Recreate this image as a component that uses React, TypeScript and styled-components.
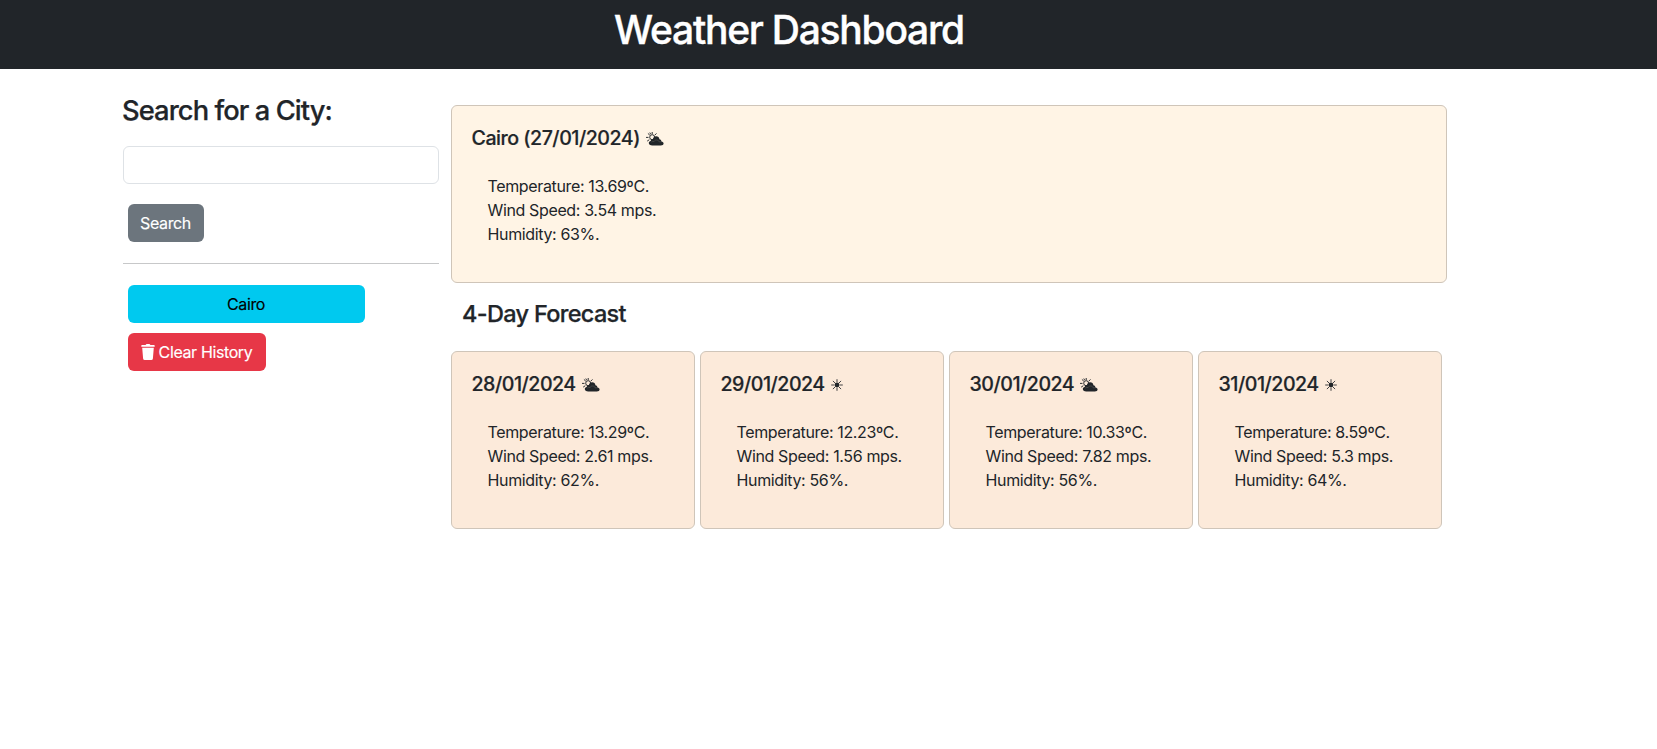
import React from "react";
import styled, { createGlobalStyle } from "styled-components";

const GlobalStyle = createGlobalStyle`
  *, *::before, *::after { box-sizing: border-box; }
  body {
    margin: 0;
    background: #fff;
    color: #212529;
    font-family: Inter, "Liberation Sans", sans-serif;
    font-size: 16px;
    line-height: 24px;
    font-feature-settings: "calt" 0;
  }
`;

const Header = styled.header`
  height: 69px;
  padding: 6px 79px 0 0;
  background: #212529;
  color: #fff;
  text-align: center;
`;

const PageTitle = styled.h1`
  margin: 0;
  font-size: 39px;
  line-height: 48px;
  font-weight: 500;
  letter-spacing: -1.25px;
  -webkit-text-stroke: 0.4px currentColor;
`;

const Layout = styled.div`
  display: flex;
  align-items: flex-start;
  width: 1324px;
  margin-left: 123px;
`;

const Sidebar = styled.aside`
  width: 316px;
  margin-right: 12px;
  padding-top: 25px;
`;

const SearchForm = styled.form`
  display: flex;
  flex-direction: column;
  align-items: flex-start;
`;

const SidebarTitle = styled.h3`
  margin: 0 0 18px -1px;
  font-size: 27.3px;
  line-height: 34px;
  font-weight: 500;
  letter-spacing: -0.92px;
  -webkit-text-stroke: 0.25px currentColor;
`;

const CityInput = styled.input`
  width: 100%;
  height: 38px;
  padding: 6px 12px;
  border: 1px solid #dee2e6;
  border-radius: 6px;
  background: #fff;
  font: inherit;
`;

const Button = styled.button<{ $bg: string; $color?: string; $width: number }>`
  display: flex;
  align-items: center;
  justify-content: center;
  gap: 4px;
  width: ${(p) => p.$width}px;
  height: 38px;
  padding: 0 1px 0 0;
  border: 0;
  border-radius: 6px;
  background: ${(p) => p.$bg};
  color: ${(p) => p.$color ?? "#fff"};
  font: inherit;
  letter-spacing: -0.38px;
  -webkit-text-stroke: 0.15px currentColor;
  white-space: nowrap;
`;

const SearchButton = styled(Button)`
  margin: 20px 0 0 5px;
`;

const Divider = styled.hr`
  height: 1px;
  margin: 21px 0;
  border: 0;
  background: #c7c8c9;
`;

const History = styled.div`
  display: flex;
  flex-direction: column;
  align-items: flex-start;
  gap: 10px;
  padding-left: 5px;
`;

const Main = styled.main`
  flex: 1;
  padding-top: 36px;
`;

const Card = styled.section<{ $bg: string }>`
  height: 178px;
  padding: 20px 19.5px 0;
  border: 1px solid #cfc5b9;
  border-radius: 6px;
  background: ${(p) => p.$bg};
`;

const CardTitle = styled.h5`
  display: flex;
  align-items: center;
  gap: 6px;
  margin: 0 0 24px;
  font-size: 19.6px;
  line-height: 24px;
  font-weight: 500;
  letter-spacing: -0.48px;
  -webkit-text-stroke: 0.2px currentColor;
  white-space: nowrap;
`;

const Readings = styled.ul`
  margin: 0;
  padding: 0 0 0 16px;
  list-style: none;
  letter-spacing: -0.36px;
  white-space: nowrap;
`;

const ForecastTitle = styled.h4`
  margin: 16px 0 23px 11px;
  font-size: 23.5px;
  line-height: 29px;
  font-weight: 500;
  letter-spacing: -0.68px;
  -webkit-text-stroke: 0.25px currentColor;
`;

const ForecastRow = styled.div`
  display: grid;
  grid-template-columns: repeat(4, 244px);
  gap: 5px;
`;

const WeatherSvg = styled.svg`
  flex: none;
  margin-top: 2px;
`;

function TrashIcon() {
  return (
    <svg width="14" height="16" viewBox="0 0 14 16" fill="currentColor" stroke="none">
      <path d="M1 1.1h3.600C4.800.4 5.300 0 6 0h2c.7 0 1.200.4 1.400 1.100H13a.7.7 0 0 1 .7.7v.9H.3v-.9A.7.7 0 0 1 1 1.100Z" />
      <path d="M1.200 3.700h11.600l-.9 10.700a1.700 1.700 0 0 1-1.700 1.600H3.800a1.700 1.700 0 0 1-1.700-1.600Z" />
    </svg>
  );
}

function CloudySunIcon() {
  return (
    <WeatherSvg width="18" height="14" viewBox="0 0 18 14" fill="none">
      <g stroke="#212529" strokeWidth=".95" strokeLinecap="round">
        <path d="M6.200.3v1.500M2.200 1.700l1.300 1.200M10.200 1.700 9 2.900M.4 5.400h1.700M1.500 8.900l1.500-1M4 .9l.5 1" />
        <circle cx="6.200" cy="5.200" r="2.500" />
      </g>
      <path
        d="M6.300 13.400c-2.200 0-3.500-1-3.500-2.400 0-1.100.8-1.900 1.900-2.100.2-1.200 1.100-2 2.300-2 .3-1.600 1.600-2.600 3.200-2.600 1.800 0 3.100 1.200 3.200 2.900 1.300.2 2 1 2 2.200 1.300.1 2.200.9 2.200 2 0 1.200-1.100 2-2.800 2Z"
        fill="#212529"
      />
      <path d="M5.300 10.200c.7-.8 1.700-1 2.700-.6.6-1.200 1.700-1.800 3-1.600 1.200.2 1.900.9 2.100 1.900.8-.3 1.500-.2 2.100.2" stroke="#7d7974" strokeWidth=".35" />
    </WeatherSvg>
  );
}

function SunIcon() {
  return (
    <WeatherSvg width="12" height="12" viewBox="0 0 12 12">
      <circle cx="6" cy="6" r="2.400" fill="#212529" />
      <path
        d="M6 .2v3M6 8.800v3M.2 6h3M8.800 6h3M1.900 1.900l2.200 2.200M7.900 7.900l2.200 2.200M1.900 10.100l2.200-2.200M7.900 4.100l2.200-2.200"
        stroke="#212529"
        strokeWidth=".85"
      />
    </WeatherSvg>
  );
}

interface Weather {
  title: string;
  sunny?: boolean;
  temp: string;
  wind: string;
  humidity: string;
}

const today: Weather = { title: "Cairo (27/01/2024)", temp: "13.69", wind: "3.54", humidity: "63" };

const forecast: Weather[] = [
  { title: "28/01/2024", temp: "13.29", wind: "2.61", humidity: "62" },
  { title: "29/01/2024", sunny: true, temp: "12.23", wind: "1.56", humidity: "56" },
  { title: "30/01/2024", temp: "10.33", wind: "7.82", humidity: "56" },
  { title: "31/01/2024", sunny: true, temp: "8.59", wind: "5.3", humidity: "64" },
];

function WeatherCard({ data, bg }: { data: Weather; bg: string }) {
  return (
    <Card $bg={bg}>
      <CardTitle>
        {data.title}
        {data.sunny ? <SunIcon /> : <CloudySunIcon />}
      </CardTitle>
      <Readings>
        <li>{`Temperature: ${data.temp}ºC.`}</li>
        <li>{`Wind Speed: ${data.wind} mps.`}</li>
        <li>{`Humidity: ${data.humidity}%.`}</li>
      </Readings>
    </Card>
  );
}

export default function App() {
  return (
    <>
      <GlobalStyle />
      <Header>
        <PageTitle>Weather Dashboard</PageTitle>
      </Header>
      <Layout>
        <Sidebar>
          <SearchForm>
            <SidebarTitle>Search for a City:</SidebarTitle>
            <CityInput aria-label="City" />
            <SearchButton type="button" $bg="#6c757d" $width={76}>Search</SearchButton>
          </SearchForm>
          <Divider />
          <History>
            <Button $bg="#00c9ef" $color="#000" $width={237}>Cairo</Button>
            <Button $bg="#e73747" $width={138}>
              <TrashIcon />
              Clear History
            </Button>
          </History>
        </Sidebar>
        <Main>
          <WeatherCard data={today} bg="#fff4e5" />
          <ForecastTitle>4-Day Forecast</ForecastTitle>
          <ForecastRow>
            {forecast.map((day) => (
              <WeatherCard key={day.title} data={day} bg="#fceada" />
            ))}
          </ForecastRow>
        </Main>
      </Layout>
    </>
  );
}
